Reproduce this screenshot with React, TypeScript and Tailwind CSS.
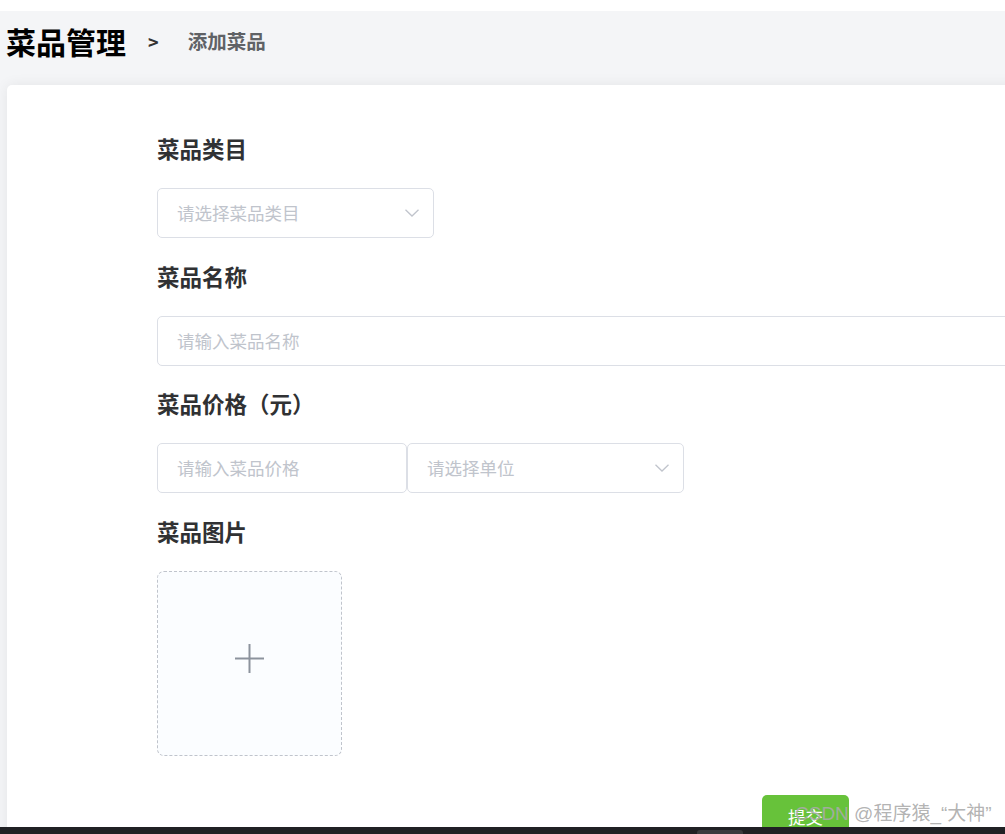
const font = { fontFamily: '"Noto Sans CJK SC", "Noto Sans", sans-serif' };

function Label({ text }: { text: string }) {
  return (
    <div className="h-[40px] flex items-center text-[22.5px] font-bold text-[#303133] mb-[19px]">
      {text}
    </div>
  );
}

function Chevron() {
  return (
    <svg width="14" height="8" viewBox="0 0 14 8" fill="none">
      <polyline points="0.5,0.8 7,7 13.5,0.8" stroke="#c0c4cc" strokeWidth="1.3" />
    </svg>
  );
}

function SelectBox({ placeholder, width }: { placeholder: string; width: string }) {
  return (
    <div
      className={`${width} h-[50px] shrink-0 border border-[#dcdfe6] rounded-[5px] bg-white flex items-center justify-between pl-[19px] pr-[14px]`}
    >
      <span className="text-[17.5px] text-[#c0c4cc]">{placeholder}</span>
      <Chevron />
    </div>
  );
}

function InputBox({ placeholder, width }: { placeholder: string; width: string }) {
  return (
    <div
      className={`${width} h-[50px] shrink-0 border border-[#dcdfe6] rounded-[5px] bg-white flex items-center pl-[19px]`}
    >
      <span className="text-[17.5px] text-[#c0c4cc]">{placeholder}</span>
    </div>
  );
}

export default function App() {
  return (
    <div className="h-[834px] w-[1005px] flex flex-col overflow-hidden bg-white relative" style={font}>
      <div className="h-[11px] shrink-0 bg-white" />
      <div className="flex-1 flex flex-col bg-[#f4f5f7] min-h-0">
        <div className="h-[60px] shrink-0 flex items-center pl-[6px]">
          <span className="text-[30px] font-bold text-black">菜品管理</span>
          <span className="ml-[22px] text-[18px] font-bold text-[#333]">&gt;</span>
          <span className="ml-[29px] text-[19.5px] font-bold text-[#606266]">添加菜品</span>
        </div>
        <div className="mt-[14px] ml-[7px] w-[1200px] flex-1 bg-white rounded-tl-[5px] shadow-[0_0_14px_rgba(0,0,0,0.07)] pt-[44px] pl-[150px]">
          <Label text="菜品类目" />
          <SelectBox placeholder="请选择菜品类目" width="w-[277px]" />

          <div className="mt-[19px]">
            <Label text="菜品名称" />
            <InputBox placeholder="请输入菜品名称" width="w-[950px]" />
          </div>

          <div className="mt-[18px]">
            <Label text="菜品价格（元）" />
            <div className="flex">
              <InputBox placeholder="请输入菜品价格" width="w-[250px]" />
              <SelectBox placeholder="请选择单位" width="w-[277px]" />
            </div>
          </div>

          <div className="mt-[19px]">
            <Label text="菜品图片" />
            <div className="w-[185px] h-[185px] border border-dashed border-[#c0c4cc] rounded-[7px] bg-[#fbfdff] flex items-center justify-center">
              <svg width="29" height="29" viewBox="0 0 29 29" className="mb-[10px]">
                <line x1="0" y1="14.5" x2="29" y2="14.5" stroke="#8c939d" strokeWidth="2" />
                <line x1="14.5" y1="0" x2="14.5" y2="29" stroke="#8c939d" strokeWidth="2" />
              </svg>
            </div>
          </div>

          <div className="mt-[39px] ml-[605px] w-[87px] h-[50px] bg-[#67c23a] rounded-[5px] flex items-start justify-center pt-[11px] leading-[22px] text-white text-[17.5px]">
            提交
          </div>
        </div>
      </div>
      <div className="h-[7px] shrink-0 bg-[#202124] flex">
        <div className="ml-[697px] mt-[3px] w-[46px] h-[4px] rounded-t-[3px] bg-[#3a3b3e]" />
      </div>
      <div
        className="absolute left-[795px] top-[804px] text-[19px] text-[rgba(170,170,170,0.9)] leading-none"
        style={{ fontFamily: '"Liberation Sans", "Noto Sans CJK SC", sans-serif' }}
      >
        CSDN @程序猿_“大神”
      </div>
    </div>
  );
}
